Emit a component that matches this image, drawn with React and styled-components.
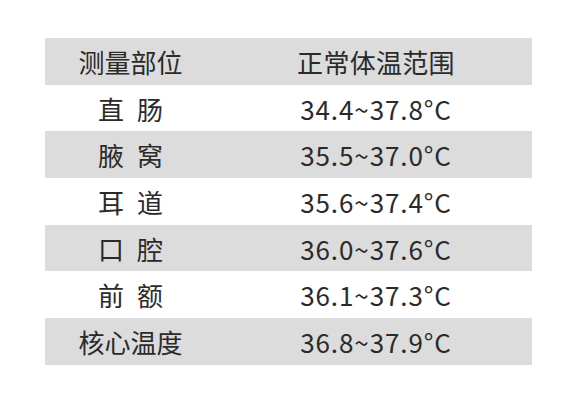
import React from "react";
import styled, { createGlobalStyle } from "styled-components";

const GlobalStyle = createGlobalStyle`
  body {
    margin: 0;
    background: #ffffff;
    font-family: "Noto Sans CJK SC", "Noto Sans", sans-serif;
  }
`;

const rows = [
  { part: ["直", "肠"], range: "34.4~37.8°C" },
  { part: ["腋", "窝"], range: "35.5~37.0°C" },
  { part: ["耳", "道"], range: "35.6~37.4°C" },
  { part: ["口", "腔"], range: "36.0~37.6°C" },
  { part: ["前", "额"], range: "36.1~37.3°C" },
  { part: ["核心温度"], range: "36.8~37.9°C" },
];

export default function App() {
  return (
    <>
      <GlobalStyle />
      <Page>
        <Table>
          <Row shaded>
            <PartCell>测量部位</PartCell>
            <RangeCell>正常体温范围</RangeCell>
          </Row>
          {rows.map((r, i) => (
            <Row key={r.range} shaded={i % 2 === 1}>
              <PartCell>
                {r.part.map((p) => (
                  <Word key={p}>{p}</Word>
                ))}
              </PartCell>
              <RangeCell numeric>{r.range}</RangeCell>
            </Row>
          ))}
        </Table>
      </Page>
    </>
  );
}

const Page = styled.div`
  width: 577px;
  height: 400px;
  padding: 38px 0 0 45px;
  box-sizing: border-box;
`;

const Table = styled.div`
  width: 487px;
  display: flex;
  flex-direction: column;
`;

const Row = styled.div`
  display: grid;
  grid-template-columns: 171px 1fr;
  height: 46.7px;
  align-items: center;
  background: ${(props) => (props.shaded ? "#dcdcdc" : "#ffffff")};
  color: #2a2a2a;
  font-size: 26px;
`;

const PartCell = styled.div`
  display: flex;
  justify-content: center;
  gap: 13px;
`;

const Word = styled.span``;

const RangeCell = styled.div`
  text-align: center;
  padding-left: 4px;
  letter-spacing: ${(props) => (props.numeric ? "0.9px" : "0.3px")};
`;
